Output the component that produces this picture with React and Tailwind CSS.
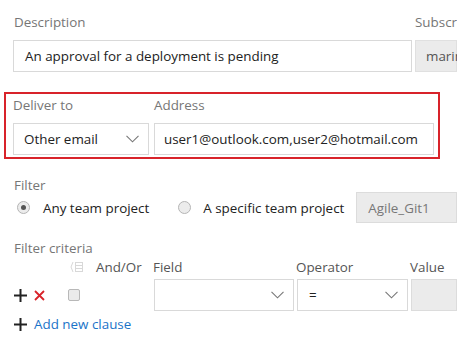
import React from "react";

const Chevron = () => (
  <svg width="13" height="8" viewBox="0 0 13 8" className="shrink-0">
    <path d="M0.5 0.8 L6.5 6.8 L12.5 0.8" fill="none" stroke="#777" strokeWidth="1.1" />
  </svg>
);

const Radio = ({ checked }) => (
  <span className="w-[13px] h-[13px] rounded-full border border-[#b5b5b5] bg-[#ececec] flex items-center justify-center shrink-0">
    {checked && <span className="w-[5px] h-[5px] rounded-full bg-[#555]" />}
  </span>
);

export default function App() {
  return (
    <div
      className="w-[457px] h-[339px] overflow-hidden bg-white text-[13.4px] leading-[18px] text-[#222]"
      style={{ fontFamily: '"Open Sans", "Noto Sans", sans-serif' }}
    >
      {/* Description row */}
      <div className="flex pt-[13px] pl-[13px]">
        <div className="w-[399px] shrink-0 flex flex-col">
          <div className="text-[#767676] pl-[1px] h-[18px]">Description</div>
          <div className="mt-[9px] h-[32px] border border-[#d9d9d9] flex items-center pl-[11px] text-[#222]">
            An approval for a deployment is pending
          </div>
        </div>
        <div className="ml-[3px] flex-1 flex flex-col overflow-hidden">
          <div className="text-[#767676] h-[18px] whitespace-nowrap">Subscr</div>
          <div className="mt-[9px] h-[32px] bg-[#ebebeb] border border-[#e0e0e0] flex items-center pl-[10px] text-[#555] whitespace-nowrap">
            marin
          </div>
        </div>
      </div>

      {/* Red highlighted deliver to */}
      <div className="ml-[4px] mt-[20px] w-[436px] h-[67px] border-2 border-[#d8232a] pt-[2px] pl-[7px] flex gap-[5px]">
        <div className="w-[136px] flex flex-col">
          <div className="text-[#767676] h-[18px]">Deliver to</div>
          <div className="mt-[9px] h-[32px] border border-[#d9d9d9] flex items-center justify-between pl-[10px] pr-[9px]">
            <span>Other email</span>
            <Chevron />
          </div>
        </div>
        <div className="w-[280px] flex flex-col">
          <div className="text-[#767676] h-[18px]">Address</div>
          <div className="mt-[9px] h-[32px] border border-[#d9d9d9] flex items-center pl-[9px] whitespace-nowrap">
            user1@outlook.com,user2@hotmail.com
          </div>
        </div>
      </div>

      {/* Filter */}
      <div className="pl-[14px] mt-[17px] text-[#767676] h-[18px]">Filter</div>
      <div className="flex items-center h-[31px] mt-[-2px]">
        <div className="ml-[17px] flex items-center">
          <Radio checked />
          <span className="ml-[13px]">Any team project</span>
        </div>
        <div className="ml-[29px] flex items-center">
          <Radio />
          <span className="ml-[12px]">A specific team project</span>
        </div>
        <div className="ml-[12px] flex-1 h-[31px] bg-[#ebebeb] border border-[#dcdcdc] flex items-center pl-[11px] text-[#777] whitespace-nowrap overflow-hidden">
          Agile_Git1
        </div>
      </div>

      {/* Filter criteria */}
      <div className="pl-[14px] mt-[16px] text-[#767676] h-[18px]">Filter criteria</div>
      <div className="flex items-center h-[18px] mt-[1px] text-[#555]">
        <svg width="14" height="12" viewBox="0 0 14 12" className="ml-[70px] shrink-0">
          <path d="M3 1 L1 6 L3 11" fill="none" stroke="#d8d8d8" strokeWidth="1" />
          <rect x="5.5" y="1.5" width="7" height="9" fill="none" stroke="#d8d8d8" strokeWidth="1" />
          <path d="M5.5 4.5 H12.5 M5.5 7.5 H12.5" stroke="#d8d8d8" strokeWidth="1" />
        </svg>
        <span className="ml-[12px] w-[57px]">And/Or</span>
        <span className="w-[143px]">Field</span>
        <span className="w-[114px]">Operator</span>
        <span>Value</span>
      </div>
      <div className="flex items-center h-[32px] mt-[3px]">
        <svg width="13" height="13" viewBox="0 0 13 13" className="ml-[14px] shrink-0">
          <path d="M6.5 0 V13 M0 6.5 H13" stroke="#222" strokeWidth="2" />
        </svg>
        <svg width="11" height="11" viewBox="0 0 11 11" className="ml-[7px] shrink-0">
          <path d="M1 1 L10 10 M10 1 L1 10" stroke="#d8232a" strokeWidth="1.8" />
        </svg>
        <span className="ml-[23px] w-[12px] h-[12px] rounded-[2px] border border-[#b8b8b8] bg-[#ebebeb] shrink-0" />
        <div className="ml-[74px] w-[140px] h-[32px] border border-[#d9d9d9] flex items-center justify-end pr-[9px] shrink-0">
          <Chevron />
        </div>
        <div className="ml-[3px] w-[111px] h-[32px] border border-[#d9d9d9] flex items-center justify-between pl-[11px] pr-[9px] shrink-0">
          <span>=</span>
          <Chevron />
        </div>
        <div className="ml-[3px] flex-1 h-[32px] bg-[#ebebeb] border border-[#dcdcdc]" />
      </div>
      <div className="flex items-center mt-[4px] h-[18px]">
        <svg width="13" height="13" viewBox="0 0 13 13" className="ml-[14px] shrink-0">
          <path d="M6.5 0 V13 M0 6.5 H13" stroke="#222" strokeWidth="2" />
        </svg>
        <span className="ml-[7px] text-[#1a73c8]">Add new clause</span>
      </div>
    </div>
  );
}
